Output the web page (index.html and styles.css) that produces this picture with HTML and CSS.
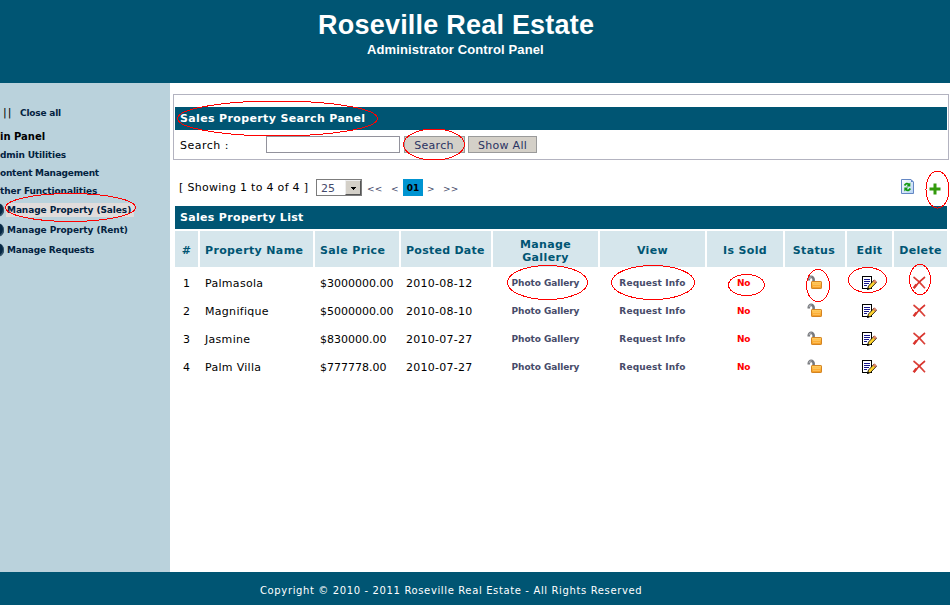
FILE: index.html
```html
<!DOCTYPE html>
<html lang="en">
<head>
<meta charset="utf-8">
<title>Roseville Real Estate</title>
<link rel="stylesheet" href="styles.css">
</head>
<body>
<svg class="defs" width="0" height="0" aria-hidden="true">
  <defs>
    <linearGradient id="gold" x1="0" y1="0" x2="0" y2="1">
      <stop offset="0" stop-color="#ffd36b"/><stop offset=".5" stop-color="#fdb338"/><stop offset="1" stop-color="#f29a23"/>
    </linearGradient>
    <linearGradient id="paper" x1="0" y1="0" x2="1" y2="1">
      <stop offset="0" stop-color="#ffffff"/><stop offset="1" stop-color="#b5d3f4"/>
    </linearGradient>
  </defs>
  <symbol id="lock" viewBox="0 0 16 16">
    <path d="M1.800 5.500V4.300a2.400 2.400 0 0 1 4.800 0V7" fill="none" stroke="#77797d" stroke-width="2.600"/>
    <path d="M2 4.200a2.500 2.500 0 0 1 2.500-2.400" fill="none" stroke="#b9bcc4"/>
    <rect x="4.500" y="6.500" width="10" height="7" rx=".6" fill="url(#gold)" stroke="#d48422"/>
    <path d="M6 9.500h7M6 11.500h7" stroke="#ffc56a" stroke-width=".7"/>
  </symbol>
  <symbol id="edit" viewBox="0 0 16 16">
    <path d="M1.500 1.500h9v12h-9z" fill="#fff" stroke="#000" shape-rendering="crispEdges"/>
    <path d="M3 4.500h6M3 6.500h6M3 8.500h5M3 10.500h3" stroke="#16168c" shape-rendering="crispEdges"/>
    <path d="M6.500 14.500l1-3.500 5.500-5.800 2.300 2.300-5.700 5.900z" fill="#ffd42e" stroke="#000" stroke-width=".8"/>
    <path d="M12 6.200l1.500-1.500 2 2-1.500 1.500z" fill="#e88b70" stroke="#a04838" stroke-width=".5"/>
    <path d="M6 15l.8-2.600 1.800 1.700z" fill="#000"/>
  </symbol>
  <symbol id="cross" viewBox="0 0 16 16">
    <path d="M2.500 2Q8 6 14 13.200" fill="none" stroke="#da4038" stroke-width="1.600"/>
    <path d="M14 2Q8 6.500 3 13" fill="none" stroke="#d9342d" stroke-width="1.600"/>
    <path d="M5.500 9.500L2.600 13.200" stroke="#d9342d" stroke-width="2.400"/>
  </symbol>
</svg>

<header class="banner">
  <h1>Roseville Real Estate</h1>
  <p>Administrator Control Panel</p>
</header>

<div class="body">
  <nav class="side">
    <div class="toggle"><span class="bars">||</span><span>Close all</span></div>
    <ul class="groups">
      <li class="root">in Panel</li>
      <li class="g1">dmin Utilities</li>
      <li class="g2">ontent Management</li>
      <li class="g3">ther Functionalities</li>
    </ul>
    <ul class="leaves">
      <li><i class="dot"></i><span class="current">Manage Property (Sales)</span></li>
      <li><i class="dot"></i><span>Manage Property (Rent)</span></li>
      <li><i class="dot"></i><span class="req">Manage Requests</span></li>
    </ul>
  </nav>

  <main class="content">
    <section class="search">
      <h2 class="bar">Sales Property Search Panel</h2>
      <div class="form">
        <label for="q">Search :</label>
        <input id="q" type="text">
        <button class="b1">Search</button>
        <button class="b2">Show All</button>
      </div>
    </section>

    <div class="pager">
      <span class="count">[ Showing 1 to 4 of 4 ]</span>
      <span class="select"><span>25</span><i class="arrow"></i></span>
      <span class="first">&lt;&lt;</span><span class="prev">&lt;</span><b class="page">01</b><span class="next">&gt;</span><span class="last">&gt;&gt;</span>
      <svg class="refresh" width="13" height="15" viewBox="0 0 13 15">
        <path d="M.5.500h9.500l2.500 2.500v11.500h-12z" fill="url(#paper)" stroke="#6487c4"/>
        <path d="M10 .5v2.500h2.500z" fill="#5d86c6"/>
        <path d="M3.500 6.500q2-3.200 4.500-.8" fill="none" stroke="#129a12" stroke-width="1.800"/>
        <path d="M9.300 3.500v4h-4z" fill="#129a12"/>
        <path d="M9.300 9.500q-2 3.200-4.500.8" fill="none" stroke="#129a12" stroke-width="1.800"/>
        <path d="M3.300 12.500v-4h4z" fill="#129a12"/>
      </svg>
      <svg class="plus" width="12" height="12" viewBox="0 0 12 12"><path d="M4.500 0.500h3v4h4v3h-4v4h-3v-4h-4v-3h4z" fill="#339a0c"/></svg>
    </div>

    <h2 class="bar list">Sales Property List</h2>

    <div class="grid head">
      <div class="c">#</div><div>Property Name</div><div>Sale Price</div><div class="posted">Posted Date</div><div class="c">Manage<br>Gallery</div><div class="c">View</div><div class="c">Is Sold</div><div class="c tight">Status</div><div class="c">Edit</div><div class="c">Delete</div>
    </div>
    <div class="grid row">
      <div class="c">1</div><div class="name">Palmasola</div><div>$3000000.00</div><div class="date">2010-08-12</div><div class="c link">Photo Gallery</div><div class="c link info">Request Info</div><div class="c no">No</div><div class="c"><svg><use href="#lock"/></svg></div><div class="c ed"><svg><use href="#edit"/></svg></div><div class="c del"><svg><use href="#cross"/></svg></div>
    </div>
    <div class="grid row">
      <div class="c">2</div><div class="name">Magnifique</div><div>$5000000.00</div><div class="date">2010-08-10</div><div class="c link">Photo Gallery</div><div class="c link info">Request Info</div><div class="c no">No</div><div class="c"><svg><use href="#lock"/></svg></div><div class="c ed"><svg><use href="#edit"/></svg></div><div class="c del"><svg><use href="#cross"/></svg></div>
    </div>
    <div class="grid row">
      <div class="c">3</div><div class="name">Jasmine</div><div>$830000.00</div><div class="date">2010-07-27</div><div class="c link">Photo Gallery</div><div class="c link info">Request Info</div><div class="c no">No</div><div class="c"><svg><use href="#lock"/></svg></div><div class="c ed"><svg><use href="#edit"/></svg></div><div class="c del"><svg><use href="#cross"/></svg></div>
    </div>
    <div class="grid row">
      <div class="c">4</div><div class="name">Palm Villa</div><div>$777778.00</div><div class="date">2010-07-27</div><div class="c link">Photo Gallery</div><div class="c link info">Request Info</div><div class="c no">No</div><div class="c"><svg><use href="#lock"/></svg></div><div class="c ed"><svg><use href="#edit"/></svg></div><div class="c del"><svg><use href="#cross"/></svg></div>
    </div>
  </main>
</div>

<footer class="foot">Copyright © 2010 - 2011 Roseville Real Estate - All Rights Reserved</footer>

<svg class="marks" width="950" height="605" viewBox="0 0 950 605" aria-hidden="true">
  <ellipse cx="277.500" cy="118.500" rx="100" ry="17.500"/>
  <ellipse cx="434" cy="144.500" rx="30.500" ry="15.500"/>
  <ellipse cx="70.500" cy="207.500" rx="65" ry="14"/>
  <ellipse cx="937.500" cy="189.500" rx="11.500" ry="18.500"/>
  <ellipse cx="547.500" cy="282.500" rx="40" ry="17"/>
  <ellipse cx="653" cy="282.500" rx="41.500" ry="17"/>
  <ellipse cx="746.500" cy="285" rx="18" ry="10.500"/>
  <ellipse cx="818" cy="285.500" rx="11.500" ry="16"/>
  <ellipse cx="867.500" cy="280" rx="19" ry="12.500"/>
  <ellipse cx="920" cy="279.500" rx="10.500" ry="15"/>
</svg>
</body>
</html>
```
FILE: styles.css
```css
* { box-sizing: border-box; }
body {
  margin: 0;
  width: 950px;
  height: 605px;
  overflow: hidden;
  display: flex;
  flex-direction: column;
  position: relative;
  background: #fff;
  color: #000;
  font: 11px/14px "DejaVu Sans", sans-serif;
}
h1, h2, p, ul { margin: 0; padding: 0; font-size: inherit; }
ul { list-style: none; }
.defs { position: absolute; }

.banner {
  height: 83px;
  padding: 9px 0 0 319px;
  background: #005573;
  color: #fff;
  font-family: "Liberation Sans", sans-serif;
  font-weight: bold;
  white-space: nowrap;
}
.banner h1 { margin-left: -1px; font-size: 27px; line-height: 32px; letter-spacing: .22px; }
.banner p { margin-left: 48px; font-size: 13px; line-height: 18px; letter-spacing: .13px; }

.body { display: flex; height: 489px; }
.side {
  width: 170px;
  overflow: hidden;
  background: #bad2dc;
  color: #03223f;
  font: bold 9px/18px "DejaVu Sans", sans-serif;
  white-space: nowrap;
}
.toggle { display: flex; padding: 21px 0 0 3px; letter-spacing: -.2px; }
.bars { width: 17px; font-weight: normal; font-size: 11px; letter-spacing: 1px; color: #000; }
.groups { padding-top: 6px; }
.groups li { display: flex; height: 18px; }
.groups .root { font-size: 10px; color: #000; }
.g1 { letter-spacing: -.15px; }
.g2 { letter-spacing: -.25px; }
.g3 { letter-spacing: -.1px; }
.leaves li { display: flex; align-items: center; height: 20px; letter-spacing: -.08px; }
.leaves span { padding: 0 1px; line-height: 14px; }
.leaves .req { letter-spacing: -.2px; }
.leaves .current { width: 128px; background: #e1dcdb; }
.dot { width: 14px; height: 14px; margin: 0 2px 0 -10px; flex: none; border-radius: 50%; background: #082945; box-shadow: inset -1px -1px #35566c; }

.content { width: 780px; padding: 11px 1px 0 3px; white-space: nowrap; }
.search { width: 776px; height: 66px; padding: 12px 1px 0; border: 1px solid #b3b3c0; }
.bar {
  width: 772px;
  height: 23px;
  padding-left: 5px;
  background: #005573;
  color: #fff;
  font-weight: bold;
  line-height: 24px;
  letter-spacing: .36px;
}
.form { display: flex; padding-top: 6px; height: 23px; }
.form label { width: 91px; padding-left: 5px; line-height: 19px; letter-spacing: .5px; }
.form input { width: 134px; height: 17px; padding: 0; border: 1px solid #92929c; background: #fff; }
.form button { height: 17px; margin: 0; padding: 1px 0 0; border: 1px solid #9a9a9a; background: #d4d0c8; color: #2b3362; font: 11px/15px "DejaVu Sans", sans-serif; letter-spacing: .3px; }
.form .b1 { width: 61px; margin-left: 4px; padding-right: 1px; }
.form .b2 { width: 69px; margin-left: 3px; }

.pager { display: flex; align-items: center; height: 17px; margin-top: 19px; padding-left: 6px; color: #44496a; }
.count { width: 137px; padding-top: 1px; color: #000; letter-spacing: .3px; }
.select { display: flex; width: 46px; height: 17px; padding-left: 4px; border: 1px solid #7c7c7c; justify-content: space-between; line-height: 17px; }
.arrow { width: 16px; height: 15px; background: linear-gradient(#000, #000) 5px 6px / 5px 1px no-repeat, linear-gradient(#000, #000) 6px 7px / 3px 1px no-repeat, linear-gradient(#000, #000) 7px 8px / 1px 1px no-repeat, #d4d0c8; border: 1px solid; border-color: #eee #555 #555 #eee; }
.first, .prev, .next, .last { padding-top: 2px; font-size: 9px; }
.first { width: 29px; padding-left: 5px; letter-spacing: .3px; }
.prev { width: 12px; }
.page { width: 20px; height: 17px; background: #0094d1; color: #000; font: bold 9px/19px "DejaVu Sans", sans-serif; text-align: center; }
.next { width: 20px; padding-left: 4px; }
.last { letter-spacing: .3px; }
.refresh { margin: -2px 0 0 auto; }
.plus { margin: 2px 8px 0 15px; }

.list { margin: 10px 0 0 2px; letter-spacing: .32px; }
.grid { display: grid; grid-template-columns: 23px 113px 84px 90px 105px 105px 76px 60px 45px 53px; column-gap: 2px; margin-left: 2px; }
.grid > div { display: flex; align-items: center; padding-left: 5px; }
.grid > .c { justify-content: center; padding-left: 0; text-align: center; }
.head { height: 36px; margin: 2px 0 2px 2px; color: #005573; font-weight: bold; line-height: 13px; letter-spacing: .36px; }
.head > div { background: #d6e6ec; padding-top: 3px; }
.head .posted { letter-spacing: .26px; }
.head .tight { padding-right: 2px; }
.row { height: 28px; }
.row > div { padding-top: 1px; }
.name { letter-spacing: .3px; }
.date { letter-spacing: .26px; }
.row .link, .row .no { padding-top: 0; font: bold 9px/14px "DejaVu Sans", sans-serif; color: #474b69; letter-spacing: -.08px; }
.row .info { letter-spacing: .14px; }
.row .no { color: #f00; letter-spacing: -.3px; padding-right: 3px; }
.row svg { width: 16px; height: 16px; margin-top: -1px; }
.row .ed { padding-right: 2px; }
.row .del { padding-right: 4px; }

.foot { height: 33px; padding: 4px 0 0 260px; background: #005573; color: #fff; font-size: 10px; line-height: 30px; letter-spacing: .63px; white-space: nowrap; }

.marks { position: absolute; left: 0; top: 0; pointer-events: none; fill: none; stroke: #f00; stroke-width: 1; shape-rendering: crispEdges; }
```
